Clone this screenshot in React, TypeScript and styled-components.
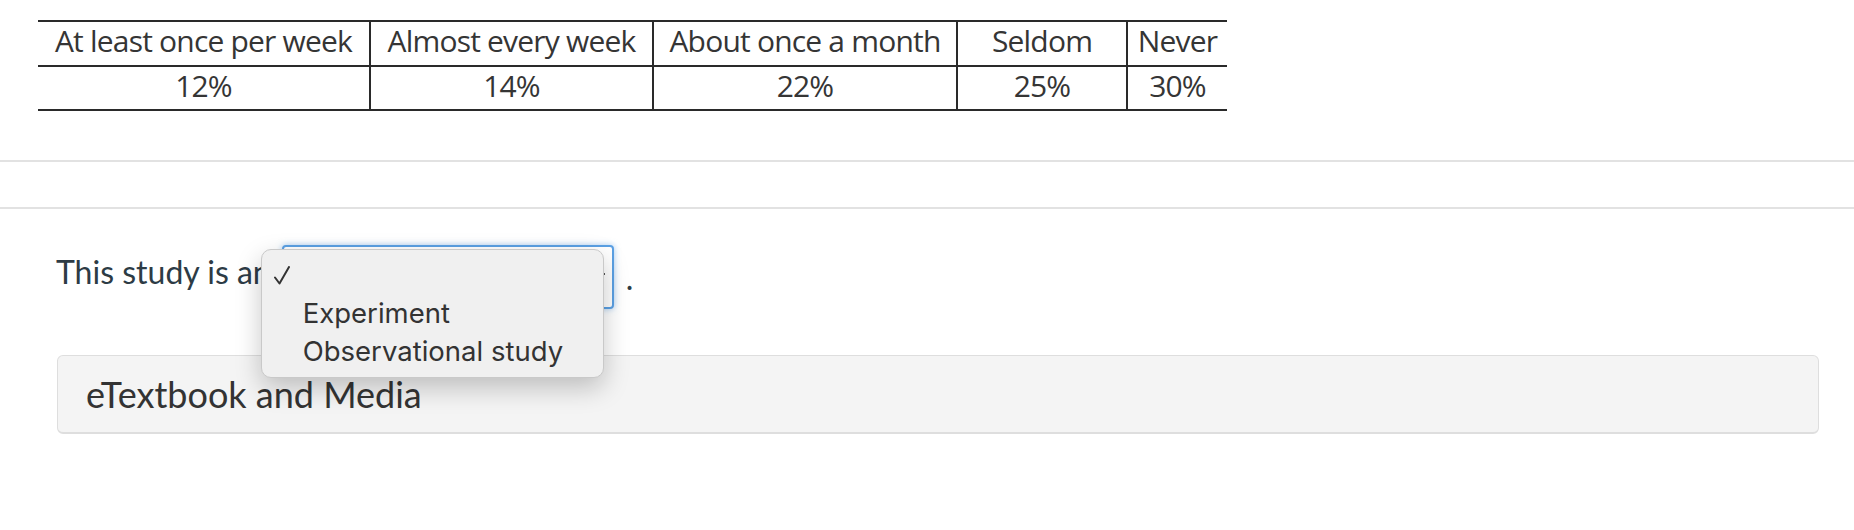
import styled, { createGlobalStyle } from 'styled-components';

const GlobalStyle = createGlobalStyle`
  html, body {
    margin: 0;
    padding: 0;
    background: #ffffff;
  }
  body {
    font-family: Lato, "Liberation Sans", sans-serif;
    color: #2d3b45;
  }
`;

const headers = ['At least once per week', 'Almost every week', 'About once a month', 'Seldom', 'Never'];
const values = ['12%', '14%', '22%', '25%', '30%'];
const colWidths = [332, 283, 304, 170, 100];
const options = ['Experiment', 'Observational study'];

const Page = styled.div`
  width: 1854px;
  display: flex;
  flex-direction: column;
`;

const TableWrap = styled.div`
  padding: 20px 0 0 38px;
`;

const FreqTable = styled.table`
  border-collapse: collapse;
  table-layout: fixed;
  font-family: "Open Sans", sans-serif;
  font-size: 30px;
  letter-spacing: -0.8px;
  color: #353535;
  border-top: 2px solid #2a2a2a;
  border-bottom: 2px solid #2a2a2a;
`;

const Cell = styled.td<{ $head?: boolean }>`
  height: ${(p) => (p.$head ? 38 : 37)}px;
  padding: 0 0 5px 0;
  line-height: 1;
  vertical-align: middle;
  text-align: center;
  white-space: nowrap;
  overflow: hidden;
  border-left: 2px solid #2a2a2a;
  border-bottom: ${(p) => (p.$head ? '2px solid #2a2a2a' : 'none')};
  &:first-child {
    border-left: none;
  }
`;

const Divider = styled.div<{ $top: number }>`
  margin-top: ${(p) => p.$top}px;
  height: 2px;
  background: #e2e2e2;
`;

const QuestionRow = styled.div`
  margin-top: 36px;
  padding-left: 56px;
  display: flex;
  align-items: center;
  height: 64px;
  font-size: 32px;
  color: #2d3b45;
`;

const Prompt = styled.span`
  padding-bottom: 12px;
`;

const SelectWrap = styled.div`
  position: relative;
  margin-left: 11px;
`;

const SelectBox = styled.div`
  width: 332px;
  height: 64px;
  box-sizing: border-box;
  border: 2px solid #5aa0e4;
  border-radius: 4px;
  background: #ffffff;
  box-shadow: 0 0 6px rgba(90, 160, 228, 0.55);
  position: relative;
`;

const ArrowMark = styled.span`
  position: absolute;
  right: 7px;
  top: 26px;
  width: 3px;
  height: 2px;
  background: #555;
`;

const Popup = styled.ul`
  position: absolute;
  left: -21px;
  top: 4px;
  width: 343px;
  height: 129px;
  box-sizing: border-box;
  margin: 0;
  padding: 6px 0 0 0;
  list-style: none;
  background: #f0f0f0;
  border: 1px solid #c9c9c9;
  border-radius: 10px;
  box-shadow: 0 10px 26px rgba(0, 0, 0, 0.22);
  font-family: Inter, "Noto Sans", sans-serif;
  font-size: 27.5px;
  color: #333333;
  z-index: 2;
`;

const Option = styled.li`
  height: 38px;
  line-height: 38px;
  display: flex;
  align-items: center;
`;

const CheckSlot = styled.span`
  width: 41px;
  height: 38px;
  padding-left: 12px;
  box-sizing: border-box;
  display: flex;
  align-items: center;
`;

const Period = styled.span`
  margin-left: 12px;
`;

const Panel = styled.div`
  margin: 46px 35px 0 57px;
  height: 79px;
  box-sizing: border-box;
  background: #f4f4f4;
  border: 1px solid #dedede;
  border-bottom-width: 2px;
  border-radius: 6px;
  display: flex;
  align-items: center;
  padding-left: 28px;
  font-size: 36px;
  color: #333333;
`;

const CheckIcon = () => (
  <svg width="16" height="19" viewBox="0 0 16 19" fill="none">
    <path d="M1 11.5 L5.5 17.5 L15 1" stroke="#333" strokeWidth="2" strokeLinecap="round" strokeLinejoin="round" />
  </svg>
);

export default function App() {
  return (
    <Page>
      <GlobalStyle />
      <TableWrap>
        <FreqTable>
          <colgroup>
            {colWidths.map((w, i) => (
              <col key={i} style={{ width: w }} />
            ))}
          </colgroup>
          <tbody>
            <tr>
              {headers.map((h) => (
                <Cell key={h} $head>
                  {h}
                </Cell>
              ))}
            </tr>
            <tr>
              {values.map((v) => (
                <Cell key={v}>{v}</Cell>
              ))}
            </tr>
          </tbody>
        </FreqTable>
      </TableWrap>
      <Divider $top={49} />
      <Divider $top={45} />
      <QuestionRow>
        <Prompt>This study is an</Prompt>
        <SelectWrap>
          <SelectBox>
            <ArrowMark />
          </SelectBox>
          <Popup>
            <Option>
              <CheckSlot>
                <CheckIcon />
              </CheckSlot>
            </Option>
            {options.map((o) => (
              <Option key={o}>
                <CheckSlot />
                {o}
              </Option>
            ))}
          </Popup>
        </SelectWrap>
        <Period>.</Period>
      </QuestionRow>
      <Panel>eTextbook and Media</Panel>
    </Page>
  );
}
